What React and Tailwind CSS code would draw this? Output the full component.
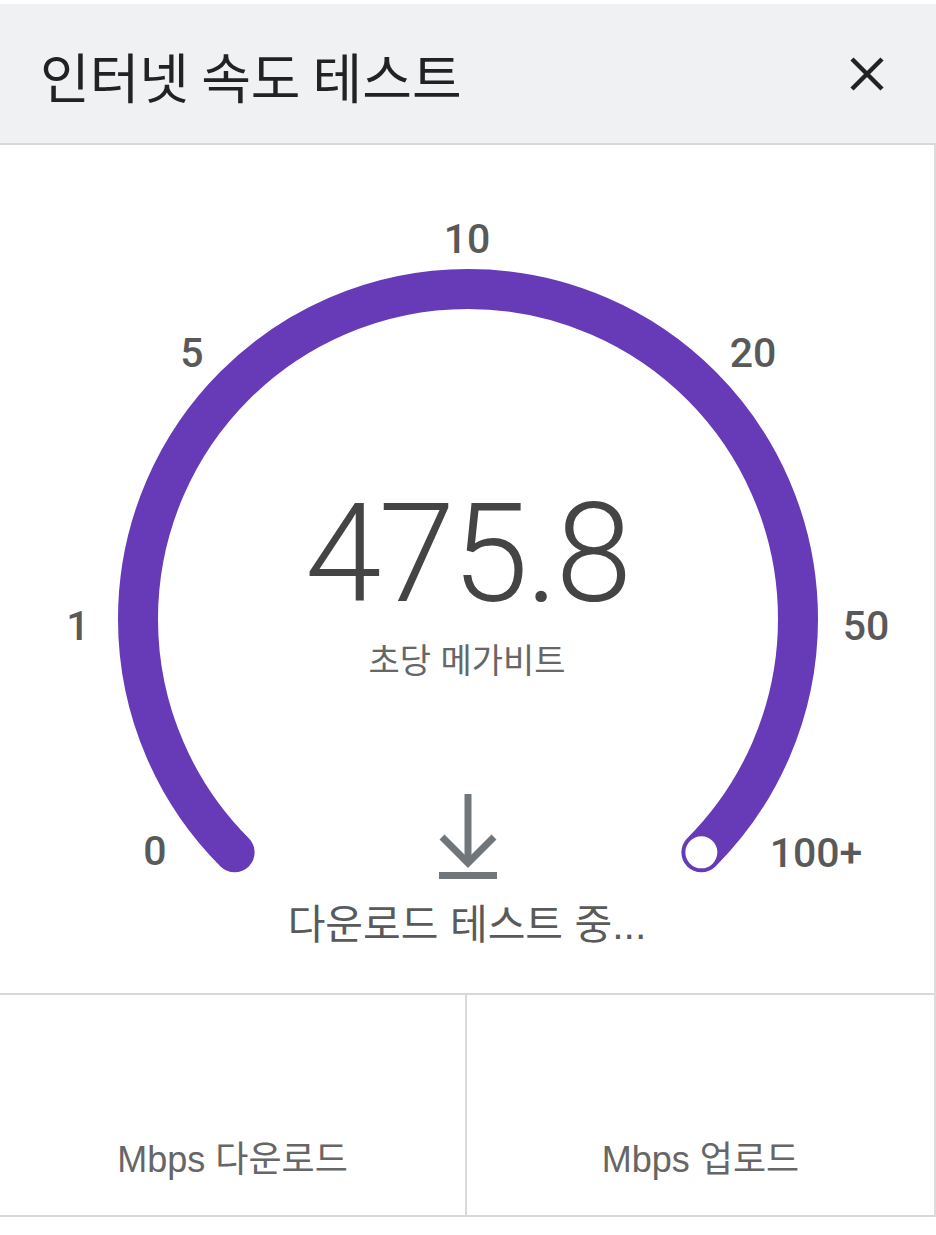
import React from "react";

// gauge geometry (section coords)
const CX = 468;
const CY = 474;
const R = 330;
const STROKE = 40;

const ticks = [
  { label: "0", x: 155, y: 720 },
  { label: "1", x: 78, y: 495 },
  { label: "5", x: 192, y: 222 },
  { label: "10", x: 467, y: 108 },
  { label: "20", x: 753, y: 222 },
  { label: "50", x: 866, y: 495 },
  { label: "100+", x: 816, y: 722 },
];

const polar = (deg) => {
  const rad = (deg * Math.PI) / 180;
  return [CX + R * Math.cos(rad), CY - R * Math.sin(rad)];
};

const Gauge = () => {
  const [sx, sy] = polar(225);
  const [ex, ey] = polar(-45);
  return (
    <svg
      className="absolute inset-0"
      width="934"
      height="850"
      viewBox="0 0 934 850"
    >
      <path
        d={`M ${sx} ${sy} A ${R} ${R} 0 1 1 ${ex} ${ey}`}
        fill="none"
        stroke="#673ab7"
        strokeWidth={STROKE}
        strokeLinecap="round"
      />
      <circle cx={ex} cy={ey} r="17" fill="#fff" stroke="#673ab7" strokeWidth="2" />
      {ticks.map((t) => (
        <text
          key={t.label}
          x={t.x}
          y={t.y}
          textAnchor="middle"
          fill="#595959"
          fontSize="41"
          fontWeight="500"
          fontFamily="Roboto, 'Liberation Sans', sans-serif"
        >
          {t.label}
        </text>
      ))}
    </svg>
  );
};

const DownloadIcon = () => (
  <svg width="58" height="85" viewBox="0 0 58 85" fill="none">
    <line x1="29" y1="0" x2="29" y2="70" stroke="#71767a" strokeWidth="7" />
    <polyline points="3,43 29,69 55,43" stroke="#71767a" strokeWidth="7" />
    <rect x="0" y="78" width="58" height="7" fill="#71767a" />
  </svg>
);

const App = () => {
  return (
    <div className="w-full min-h-[1235px] bg-white pt-[4px] font-['Liberation_Sans','Noto_Sans_CJK_KR',sans-serif]">
      {/* header */}
      <div className="h-[141px] bg-[#f0f1f3] border-b-2 border-[#d9d9d9] flex items-center justify-between pl-[40px] pr-[52px] pt-[5px]">
        <h1 className="text-[54px] leading-none text-[#222] font-['Noto_Sans_CJK_KR',sans-serif] font-normal">
          인터넷 속도 테스트
        </h1>
        <button className="w-[34px] h-[34px] -mt-[5px]">
          <svg width="34" height="34" viewBox="0 0 34 34">
            <path d="M2 2 L32 32 M32 2 L2 32" stroke="#222" strokeWidth="4.5" />
          </svg>
        </button>
      </div>

      <div className="border-r-2 border-[#dcdcdc]">
        {/* gauge */}
        <div className="relative h-[850px] border-b-2 border-[#d9d9d9] flex flex-col items-center">
          <Gauge />
          <div className="relative pt-[340px] flex flex-col items-center">
            <div className="text-[138px] leading-none text-[#444] font-['Roboto',sans-serif] font-light tracking-[-3px]">
              475.8
            </div>
            <div className="mt-[21px] text-[34px] leading-none text-[#666]">
              초당 메가비트
            </div>
            <div className="mt-[116px] ml-[2px]">
              <DownloadIcon />
            </div>
            <div className="mt-[26px] text-[41px] leading-none text-[#5a5a5a]">
              다운로드 테스트 중...
            </div>
          </div>
        </div>

        {/* results */}
        <div className="grid grid-cols-2 h-[222px] border-b-2 border-[#d9d9d9]">
          <div className="border-r-2 border-[#d9d9d9] flex items-end justify-center pb-[37px]">
            <span className="text-[36px] leading-none text-[#666]">Mbps 다운로드</span>
          </div>
          <div className="flex items-end justify-center pb-[37px]">
            <span className="text-[36px] leading-none text-[#666]">Mbps 업로드</span>
          </div>
        </div>
      </div>
    </div>
  );
};

export default App;
